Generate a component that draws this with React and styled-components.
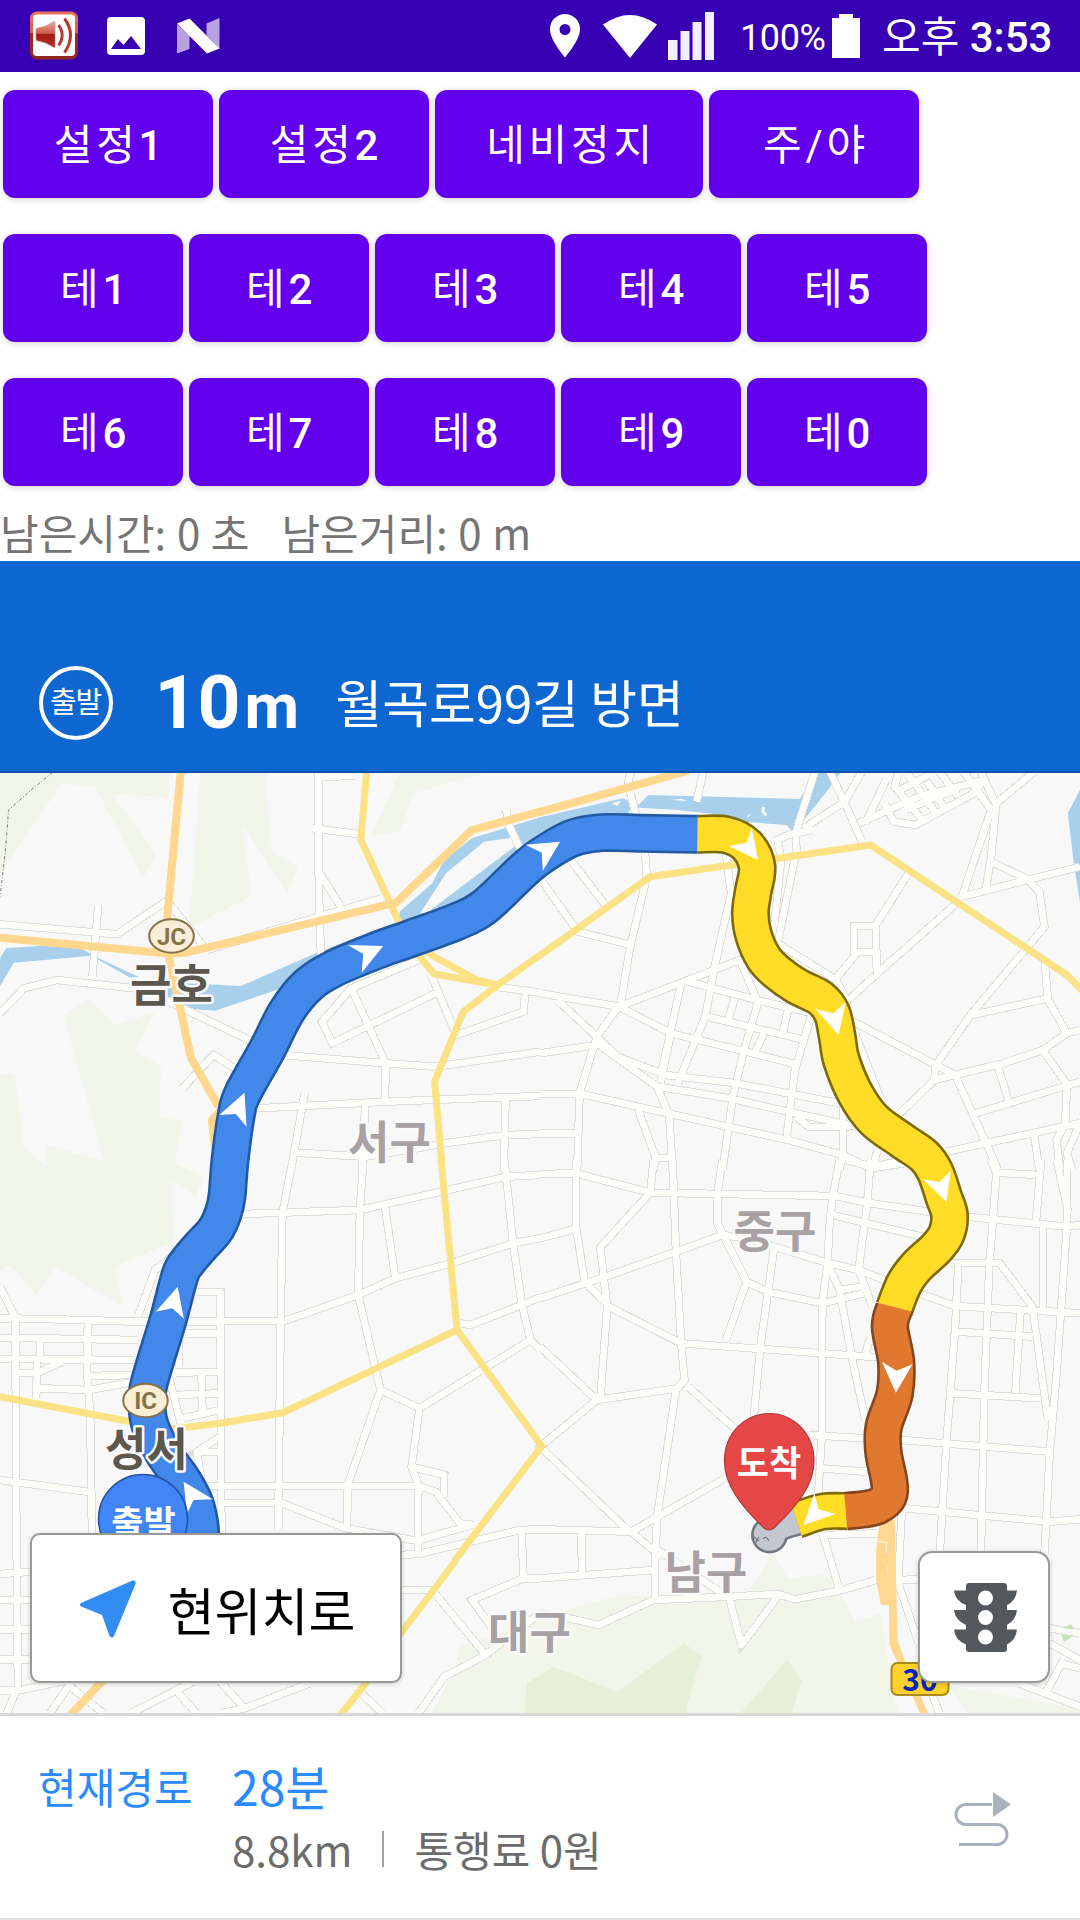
import React from "react";
import styled, { createGlobalStyle } from "styled-components";

const GlobalStyle = createGlobalStyle`
  * { box-sizing: border-box; }
  body {
    margin: 0;
    background: #fff;
    font-family: Roboto, "Noto Sans CJK KR", sans-serif;
  }
`;

const Screen = styled.div`
  width: 1080px;
  height: 1920px;
  display: flex;
  flex-direction: column;
  overflow: hidden;
  background: #fff;
`;

/* ---------- status bar ---------- */

const StatusBar = styled.header`
  height: 72px;
  flex: none;
  display: flex;
  align-items: center;
  justify-content: space-between;
  padding: 0 28px 0 29px;
  background: #3700b3;
  color: #fff;
`;

const StatusGroup = styled.div`
  display: flex;
  align-items: center;
  height: 72px;
`;

const StatusIcon = styled.svg`
  display: block;
  flex: none;
  margin-left: ${(p) => p.$gap || 0}px;
`;

const BatteryLevel = styled.span`
  margin-left: 26px;
  width: 89px;
  font-size: 36px;
  letter-spacing: -0.4px;
  line-height: 48px;
  padding-top: 3px;
  white-space: nowrap;
`;

const Clock = styled.span`
  margin-left: 22px;
  width: 170px;
  font-size: 42px;
  line-height: 56px;
  padding-top: 4px;
  white-space: nowrap;
`;

const Medium = styled.span`
  font-weight: 500;
`;

/* ---------- control buttons ---------- */

const Controls = styled.div`
  flex: none;
  height: 432px;
  display: flex;
  flex-direction: column;
  gap: 36px;
  padding: 18px 3px;
`;

const ButtonRow = styled.div`
  display: flex;
  gap: 6px;
  height: 108px;
`;

const PurpleButton = styled.button`
  width: ${(p) => p.$width}px;
  height: 108px;
  padding: 3px 0 0 4px;
  border: 0;
  border-radius: 12px;
  background: #6200ee;
  color: #fff;
  font-family: inherit;
  font-size: 42px;
  line-height: 56px;
  letter-spacing: 3.75px;
  box-shadow: 0 1px 6px rgba(0, 0, 0, 0.2);
`;

const Remaining = styled.div`
  flex: none;
  height: 57px;
  font-family: "Noto Sans CJK KR", sans-serif;
  font-size: 42px;
  line-height: 55px;
  word-spacing: 1.25px;
  color: #757575;
  white-space: pre;
`;

/* ---------- guidance banner ---------- */

const Banner = styled.section`
  flex: none;
  height: 212px;
  display: flex;
  align-items: center;
  padding: 73px 0 0 38.5px;
  background: #0e67d1;
  border-bottom: 2px solid #0c54ad;
  color: #fff;
`;

const StartBadge = styled.div`
  width: 74px;
  height: 74px;
  border: 4px solid #fff;
  border-radius: 50%;
  display: flex;
  align-items: center;
  justify-content: center;
  padding-top: 1px;
  font-size: 29px;
  letter-spacing: -1.2px;
  line-height: 40px;
`;

const Distance = styled.div`
  margin-left: 42px;
  padding-top: 3px;
  width: 181px;
  font-weight: 700;
  font-size: 75px;
  line-height: 84px;
  white-space: nowrap;
`;

const Unit = styled.span`
  font-size: 63px;
  margin-left: 4px;
`;

const Direction = styled.div`
  font-family: "Noto Sans CJK KR", sans-serif;
  font-size: 50.8px;
  line-height: 74px;
  padding-bottom: 4px;
  white-space: nowrap;
`;

/* ---------- map ---------- */

const MapArea = styled.main`
  position: relative;
  flex: none;
  height: 940px;
  overflow: hidden;
`;

const MapCanvas = styled.svg`
  display: block;
`;

const FloatingButton = styled.button`
  position: absolute;
  bottom: 30px;
  ${(p) => p.$side}: 30px;
  width: ${(p) => p.$width}px;
  height: ${(p) => p.$height}px;
  display: flex;
  align-items: center;
  justify-content: center;
  gap: 32px;
  padding: 1px 0 0 3px;
  border: 2px solid #999;
  border-radius: ${(p) => p.$radius}px;
  background: #fff;
  box-shadow: 0 1px 4px rgba(0, 0, 0, 0.2);
  font-family: "Noto Sans CJK KR", sans-serif;
  font-size: 51px;
  line-height: 74px;
  color: #000;
`;

/* ---------- route panel ---------- */

const RoutePanel = styled.footer`
  flex: none;
  height: 207px;
  display: flex;
  align-items: flex-start;
  border-top: 3px solid #d7d7d7;
  border-bottom: 2px solid #e0e0e0;
  padding: 38px 68px 0 38px;
  font-family: "Noto Sans CJK KR", sans-serif;
  background: #fff;
`;

const RouteName = styled.div`
  width: 194px;
  padding-top: 1px;
  font-size: 42px;
  line-height: 62px;
  color: #2a8aff;
`;

const RouteDetails = styled.div`
  flex: 1;
  display: flex;
  flex-direction: column;
  gap: 2px;
`;

const Duration = styled.div`
  font-size: 48px;
  line-height: 62px;
  color: #2a8aff;
`;

const Facts = styled.div`
  display: flex;
  align-items: center;
  font-size: 42px;
  line-height: 62px;
  color: #6c6c6c;
`;

const Divider = styled.span`
  width: 2px;
  height: 36px;
  margin: 0 30px 0 30px;
  background: #9da0aa;
`;

const RouteIcon = styled.svg`
  margin-top: 37px;
`;

/* ---------- map data ---------- */

const SX = 540 / 1568;
const SY = 1 / 3;

const TILES = {
  a: [0, 770],
  b: [540, 770],
  c: [0, 1160],
  d: [540, 1160],
  e: [0, 1500],
  f: [540, 1500],
};

const place = (tile, list) =>
  list.split(" ").map((pair) => {
    const [x, y] = pair.split(",").map(Number);
    return [TILES[tile][0] + x * SX, TILES[tile][1] + y * SY];
  });

const join = (pts) => pts.map((p) => p.map((n) => n.toFixed(1)).join(",")).join(" ");

const PARKS = [
  ["a", "0,0 495,0 485,82 325,72 453,252 415,325 275,48 178,42 15,290 0,330"],
  ["a", "583,0 785,0 770,28 790,245 865,292 835,370 702,160 730,378 548,475"],
  ["a", "1165,0 1440,0 1380,16 1200,70 1160,185 1078,195"],
  ["c", "0,-260 43,-258 68,-40 135,20 135,-45 302,2 185,-432 258,-485 335,-405 450,-445 392,-328 467,-280 465,-132 527,-115 508,10 592,52 568,110 500,62 502,245 332,320 358,440 163,322 105,402 32,318 0,330"],
  ["f", "-318,640 -240,505 -240,438 0,360 80,330 230,285 335,292 600,285 675,160 720,235 835,222 855,250 915,365 990,340 1030,600 1045,640"],
  ["f", "1190,558 1568,625 1568,640 1240,640"],
];

const WOODS = [
  ["f", "-45,640 -38,550 0,525 38,500 225,575 418,430 470,468 425,620 430,640"],
  ["f", "583,640 718,478 760,542 730,640"],
];

const WATER = [
  ["a", "0,648 40,578 265,557 375,622 405,622 280,562 235,535 120,527 18,535 0,565"],
  ["a", "485,652 540,640 700,648 920,548 1160,452 1160,425 1255,340 1290,270 1370,205 1480,170 1568,142 1568,250 1300,460 860,640 625,722 530,715 485,690"],
  ["b", "-5,143 240,85 285,105 315,75 755,87 800,8 872,8 840,55 770,145 735,187 715,165 520,150 285,150 -5,230"],
  ["b", "1570,55 1533,130 1550,280 1570,410"],
];

const ISLANDS = [
  ["a", "1220,430 1295,310 1405,215 1510,200 1500,225 1240,428"],
  ["b", "208,100 235,92 225,108"],
  ["b", "645,110 655,112 650,122 660,132 655,140 642,125"],
  ["b", "600,138 612,130 606,142"],
  ["b", "378,90 410,86 430,93"],
  ["b", "265,112 400,120 530,135 560,150 250,140"],
];

const STREETS = {
  a: [
    "0,463 340,493 485,392 600,540",
    "285,405 278,500 268,620",
    "0,730 70,655 165,630 390,655",
    "480,690 740,818",
    "530,955 620,855 690,900",
    "925,0 925,300 928,440 932,560",
    "925,20 1035,18",
    "908,175 1040,192",
    "928,310 990,410",
    "600,540 925,440 1110,385",
    "820,855 1120,880 1265,890 1568,845",
    "1120,880 1118,995",
    "1215,570 1020,655 935,755 965,820 1275,665",
    "1020,655 1120,880",
    "1250,610 1325,795 1520,725 1525,670",
    "1440,650 1568,668",
    "750,1015 1120,995 1568,978",
    "885,968 845,1200",
    "860,1148 1060,1160 1210,1135 1290,1120 1470,1095 1568,1092",
    "1060,1005 1052,1200",
    "1468,985 1463,1200",
    "1470,120 1475,160 1510,235",
  ],
  b: [
    "265,0 255,40 280,140",
    "475,0 455,95",
    "800,0 742,190 745,240 690,520",
    "690,210 700,270 680,470",
    "840,0 885,100 935,215",
    "935,5 885,95 765,175",
    "680,215 720,195 790,180",
    "1005,30 945,160",
    "925,160 1100,80 1290,30",
    "1030,155 1090,165 1260,70 1290,30",
    "1000,100 1030,160",
    "1040,10 1030,50 1110,150",
    "1070,15 1150,130",
    "1045,60 1130,15",
    "1125,35 1175,115",
    "1160,5 1215,80",
    "1230,5 1310,120",
    "1280,5 1325,105",
    "1060,120 1215,55",
    "1325,100 1435,5",
    "1310,120 1225,380",
    "1325,105 1310,260 1295,355",
    "1310,275 1415,328 1450,365 1465,470 1250,735 1150,885 1205,915 1345,880 1460,840 1530,790 1568,780",
    "1225,380 1415,330 1568,290",
    "1465,570 1475,690 1530,790",
    "1475,685 1255,735",
    "1460,840 1535,950",
    "1215,395 980,610 890,695",
    "1070,310 975,465 978,605",
    "980,467 912,467 912,545 980,545",
    "920,550 860,625",
    "690,520 860,630 890,690",
    "910,755 1150,885",
    "1150,885 1145,930 1040,1035",
    "1145,930 1205,915 1300,1130 1330,1200",
    "1330,890 1360,990",
    "1265,1030 1568,935",
    "1180,1145 1540,1065 1568,1060",
    "1435,1095 1450,1200",
    "1530,950 1525,1060 1500,1110 1510,1200",
    "1568,1060 1530,1150 1545,1200",
    "915,790 990,990",
    "0,325 110,485 265,525",
    "85,265 190,405",
    "305,245 310,320 260,540 235,700 165,800 115,970 108,1200",
    "0,670 230,710 380,790 600,845 750,885",
    "50,690 165,800 225,860 365,915 570,940 870,1000",
    "165,820 340,950 375,1035 385,1200",
    "230,710 430,630 580,570 630,690",
    "540,250 555,370 505,600 480,740 400,940",
    "430,635 630,690 790,730 740,900 715,1110",
    "410,640 350,920",
    "380,790 350,940",
    "565,685 545,755",
    "485,740 770,810",
    "635,690 590,850 560,980 530,1200",
    "720,720 705,790",
    "650,790 625,845",
    "345,950 550,985 720,1025 920,1070",
    "745,1040 780,1070 900,1070",
    "0,850 165,825",
    "0,972 120,972 370,1030 720,1110 880,1155 960,1195 1060,1180",
    "0,1090 110,1090",
    "285,1020 335,1160 330,1200",
    "335,1163 380,1163",
    "880,1005 880,1155 870,1200",
    "980,1140 965,1200",
  ],
  c: [
    "850,0 820,160 815,490 812,750 808,1110",
    "1055,0 1045,150 1040,405 1105,690 1010,975 1008,1100",
    "1465,0 1490,250 1515,430 1540,540 1568,570",
    "705,162 1045,150 1470,50 1568,45",
    "1118,140 1148,355",
    "820,485 1040,405 1148,355 1310,310 1490,250 1568,235",
    "1335,490 1365,495 1515,435 1568,412",
    "1540,540 1218,745 1105,690",
    "1218,745 1195,920 1215,975 1213,1180",
    "1195,920 1290,945 1288,1010",
    "600,978 1215,978 1265,995 1335,1090 1375,1095",
    "640,1028 815,1028 1005,1105 1210,1142 1370,1095",
    "1160,1185 1215,1182 1510,1110 1568,1108",
    "0,475 155,478 400,485 815,483",
    "0,380 45,475 47,1200",
    "0,533 400,540",
    "0,597 390,600",
    "50,638 110,638 180,605",
    "118,525 115,595",
    "108,600 105,715",
    "255,485 253,640 262,760 268,1200",
    "255,648 390,645",
    "115,685 260,690 390,665",
    "570,395 640,395 643,1120",
    "540,520 640,520",
    "520,540 520,620",
    "510,638 640,635",
    "585,640 588,760",
    "510,705 640,700",
    "490,650 525,790",
    "530,775 640,750",
    "640,830 572,875 650,875",
    "572,880 585,960",
    "400,470 450,330 500,290",
    "0,960 265,997",
  ],
  d: [
    "0,42 105,40 320,98 855,108 960,130 1130,155",
    "1240,170 1530,200 1568,195",
    "105,0 105,205 130,365 200,440 410,550 820,580 980,592",
    "0,235 100,208",
    "330,0 320,98 175,262 195,440 175,720",
    "385,0 395,280 410,550 420,660 395,690 340,1070 335,1200",
    "0,415 190,350 395,275 530,225 600,235 680,260 840,310 925,330 1000,360",
    "530,0 515,100 515,190 600,365 540,540",
    "680,260 640,560 620,780",
    "600,365 660,395 820,430 940,400",
    "870,0 850,110 840,200 835,310 820,430 818,830 808,1000",
    "960,0 950,130 925,330 965,440",
    "850,165 1110,230",
    "890,0 965,20 1060,0",
    "835,310 870,390 905,590 945,780",
    "870,390 935,380",
    "960,530 945,580",
    "0,560 165,720 400,685",
    "430,680 570,810",
    "165,720 0,860 260,1115",
    "0,1108 265,1115 545,950",
    "265,1115 350,1190",
    "780,825 945,835",
    "815,925 945,935",
    "1050,840 1480,875",
    "1310,0 1325,40 1315,180 1305,310 1290,700 1280,1200",
    "1325,38 1450,45",
    "1455,0 1440,190",
    "1500,0 1535,160",
    "1530,0 1530,200 1500,640 1480,880 1465,1180",
    "1190,308 1335,310 1430,440 1475,780",
    "1215,310 1205,510 1180,850 1160,1190",
    "1100,400 1205,438 1568,460",
    "1215,515 1430,530",
    "1395,460 1380,700",
    "1460,200 1460,450",
    "1195,700 1450,715",
    "1060,1045 1480,1085 1568,1078",
    "830,1125 980,1120",
  ],
  e: [
    "47,0 52,560 20,640",
    "0,222 90,215",
    "0,300 90,300",
    "0,388 90,388",
    "0,478 90,478",
    "0,572 60,570 200,540",
    "205,550 145,640",
    "205,560 300,640",
    "380,640 560,545",
    "515,575 570,640",
    "640,545 710,625 900,550",
    "640,640 710,625",
    "1030,560 1110,640",
    "1165,270 1255,270 1410,465 1290,530 1215,640",
    "1515,95 1520,235 1370,300 1430,385",
    "1520,235 1568,235",
    "1410,465 1568,340",
  ],
  f: [
    "120,90 122,225",
    "0,235 335,210",
    "335,130 333,300",
    "0,340 85,355 170,375 330,300 550,290 690,282 740,298 870,272 975,240",
    "550,295 585,435 690,290",
    "335,145 550,295",
    "820,100 870,270",
    "1040,240 1100,238",
    "1052,0 1040,250 1100,430",
    "1130,560 1160,640",
    "1480,385 1568,400",
    "1480,430 1568,480",
    "1390,550 1568,620",
    "1520,480 1470,575",
    "1510,490 1568,505",
  ],
};

const STREET_LINES = Object.entries(STREETS).flatMap(([tile, lists]) =>
  lists.map((list) => join(place(tile, list)))
);

const HIGHWAYS = [
  ["a", "525,0 485,450 490,560 555,865 635,1010"],
  ["a", "0,503 480,550 540,548 1150,398 1370,180 1568,125"],
  ["b", "-5,127 430,2"],
  ["e", "300,540 205,645"],
];

const MAIN_ROADS = [
  ["a", "1065,0 1048,210 1165,470 1215,555 1260,612 1445,645"],
  ["a", "1235,545 1385,630 1445,645 1572,552"],
  ["a", "1445,645 1345,725 1262,935 1283,1175"],
  ["b", "-5,560 320,320 960,225 1530,615 1575,662"],
  ["c", "1281,0 1327,510 822,758 640,790 490,808"],
  ["c", "0,710 380,785"],
  ["c", "1327,510 1573,858 1320,1202"],
  ["e", "1325,180 1160,405"],
  ["e", "1065,545 988,645"],
];

const BLUE = [
  ...place("c", "582,1200 582,1110 566,1030 530,960 475,880 437,800 427,740 433,670 488,480 523,345 545,305 580,262 625,210 648,160 659,110 668,0"),
  ...place("a", "687,1030 705,970 775,840 832,725 895,645 970,595 1105,537 1185,508 1325,455 1405,412 1515,305"),
  ...place("b", "0,260 92,205 180,188 300,190 457,193"),
];
const YELLOW = [
  ...place("b", "457,193 540,194 600,226 630,290 618,370 611,430 620,495 650,565 690,608 745,648 815,685 848,730 863,800 875,870 915,970 970,1050 1050,1111"),
  ...place("d", "1115,-12 1147,35 1172,110 1189,165 1180,222 1150,265 1095,318 1058,370 1028,447"),
];
const ORANGE = place("d", "1030,442 1016,500 1034,605 1030,700 998,800 997,875 1014,965 1012,1010 980,1038 940,1048 888,1053");
const YELLOW_END = place("d", "890,1053 820,1055 745,1080");
const GREY_END = place("d", "745,1080 700,1095 665,1115");

/* Catmull-Rom spline through the points */
const smooth = (pts) => {
  let d = `M${pts[0][0]} ${pts[0][1]}`;
  for (let i = 0; i < pts.length - 1; i++) {
    const p0 = pts[i - 1] || pts[i];
    const p1 = pts[i];
    const p2 = pts[i + 1];
    const p3 = pts[i + 2] || p2;
    d += `C${p1[0] + (p2[0] - p0[0]) / 6} ${p1[1] + (p2[1] - p0[1]) / 6} ${
      p2[0] - (p3[0] - p1[0]) / 6
    } ${p2[1] - (p3[1] - p1[1]) / 6} ${p2[0]} ${p2[1]}`;
  }
  return d;
};

const ROUTE = [
  { d: smooth(GREY_END), edge: "#73777e", fill: "#c3c7cf", width: 32 },
  { d: smooth(BLUE), edge: "#2259a3", fill: "#4188ea", width: 39 },
  { d: smooth(YELLOW), edge: "#7d6a08", fill: "#ffdd27", width: 39 },
  { d: smooth(YELLOW_END), edge: "#7d6a08", fill: "#ffdd27", width: 38 },
  { d: smooth(ORANGE), edge: "#84461f", fill: "#e1782f", width: 38.5 },
];

const ARROWS = [
  ["a", "1010,525 1113,528 1050,608 1055,552"],
  ["a", "637,1035 710,968 716,1070 685,1032"],
  ["c", "452,455 516,380 534,476 500,445"],
  ["c", "533,965 618,1018 562,1020 543,1062"],
  ["b", "-42,224 58,215 8,303 5,248"],
  ["b", "548,228 600,218 615,172 633,270"],
  ["b", "800,717 852,730 888,695 867,795"],
  ["d", "1112,58 1160,66 1193,32 1180,125"],
  ["d", "993,605 1035,632 1082,613 1033,698"],
  ["d", "797,1000 808,1047 858,1062 765,1095"],
];

const MapLabel = styled.text`
  font-family: "Noto Sans CJK KR", sans-serif;
  font-weight: 700;
  font-size: 45px;
  text-anchor: middle;
  fill: ${(p) => (p.$dark ? "#5c5850" : "#a8a2a5")};
  stroke: #fafafa;
  stroke-width: 5px;
  stroke-linejoin: round;
  paint-order: stroke;
`;

const PinLabel = styled.text`
  font-family: "Noto Sans CJK KR", sans-serif;
  font-weight: 700;
  font-size: 35px;
  text-anchor: middle;
  fill: #fff;
`;

const JunctionLabel = styled.text`
  font-family: Roboto, sans-serif;
  font-weight: 700;
  font-size: 24px;
  text-anchor: middle;
  fill: #857349;
`;

const RoadNumber = styled.text`
  font-family: "Noto Sans CJK KR", sans-serif;
  font-weight: 700;
  font-size: 30px;
  text-anchor: middle;
  fill: #0524c0;
`;

const Area = ({ shapes, fill }) =>
  shapes.map(([tile, list]) => <polygon key={list} points={join(place(tile, list))} fill={fill} />);

const Lines = ({ shapes, stroke, width }) =>
  shapes.map(([tile, list]) => (
    <polyline
      key={list}
      points={join(place(tile, list))}
      fill="none"
      stroke={stroke}
      strokeWidth={width}
      strokeLinejoin="round"
    />
  ));

const Junction = ({ x, y, children }) => (
  <g>
    <ellipse cx={x} cy={y} rx="22.3" ry="16.7" fill="#fbeed7" stroke="#85714a" strokeWidth="2" />
    <JunctionLabel x={x} y={y + 8.5}>
      {children}
    </JunctionLabel>
  </g>
);

function RouteMap() {
  return (
    <MapCanvas width="1080" height="940" viewBox="0 773 1080 940">
      <rect x="0" y="773" width="1080" height="940" fill="#f8f8f8" />
      <Area shapes={PARKS} fill="#f2f5ea" />
      <Area shapes={WOODS} fill="#e6f0d9" />
      <Area shapes={WATER} fill="#a8cfeb" />
      <Area shapes={ISLANDS} fill="#f8f8f8" />
      <polyline
        points={join(place("a", "152,8 90,60 25,120 15,250 0,380"))}
        fill="none"
        stroke="#777"
        strokeWidth="1"
        strokeDasharray="3 2 1 2"
      />
      <g fill="none" stroke="#dedede" strokeWidth="8.4" shapeRendering="crispEdges">
        {STREET_LINES.map((pts) => (
          <polyline key={pts} points={pts} />
        ))}
      </g>
      <g fill="none" stroke="#fdfdf9" strokeWidth="6.4" strokeLinejoin="round" shapeRendering="crispEdges">
        {STREET_LINES.map((pts) => (
          <polyline key={pts} points={pts} />
        ))}
      </g>
      <Lines shapes={MAIN_ROADS} stroke="#fbe285" width={7} />
      <Lines shapes={HIGHWAYS} stroke="#ffd78e" width={8} />
      <Area
        shapes={[
          ["a", "603,1047 635,1010 635,1150 615,1150"],
          ["f", "987,60 1030,60 1038,420 1062,490 1128,642 1105,642 1015,435 1013,315 990,315 976,240 976,150"],
        ]}
        fill="#ffd78e"
      />
      <path d="M877.5 1542H886.5V1554M887 1565V1573" fill="none" stroke="#fff6e0" strokeWidth="1" />
      <Area shapes={[["f", "1515,385 1542,373 1550,388"], ["f", "1512,402 1548,408 1522,426"]]} fill="#c9e4b4" />

      <circle cx="769.5" cy="1535" r="18.5" fill="#73777e" />
      {ROUTE.map((r) => (
        <path key={r.d} d={r.d} fill="none" stroke={r.edge} strokeWidth={r.width} strokeLinejoin="round" />
      ))}
      {ROUTE.map((r) => (
        <path
          key={r.d}
          d={r.d}
          fill="none"
          stroke={r.fill}
          strokeWidth={r.width - 5.2}
          strokeLinejoin="round"
        />
      ))}
      <circle cx="769.5" cy="1535" r="15.8" fill="#c3c7cf" />
      <path d="M753 1536l6 5m-4 3l4 -7m4 2q3 -4 6 2" fill="none" stroke="#73777e" strokeWidth="1.2" />
      <Area shapes={ARROWS} fill="#fff" />

      <MapLabel x="389.5" y="1158.5">서구</MapLabel>
      <MapLabel x="775" y="1247.5">중구</MapLabel>
      <MapLabel x="706" y="1588.5">남구</MapLabel>
      <MapLabel x="529.5" y="1648.5">대구</MapLabel>
      <MapLabel $dark x="171.5" y="1001.5">금호</MapLabel>
      <MapLabel $dark x="146.5" y="1465.5">성서</MapLabel>
      <Junction x={171.5} y={936}>JC</Junction>
      <Junction x={145.5} y={1400.5}>IC</Junction>

      <circle cx="143" cy="1519" r="44.5" fill="#4285f8" stroke="#24539f" strokeWidth="1.5" />
      <PinLabel x="143.5" y="1536">출발</PinLabel>

      <path
        d="M769 1413.5C794 1413.5 814 1434 814 1461C814 1485 797 1506 774 1528Q769 1532 764 1528C741 1506 724.5 1485 724.5 1461C724.5 1434 744 1413.5 769 1413.5Z"
        fill="#e54646"
        stroke="#a83a3a"
        strokeWidth="1.2"
      />
      <PinLabel x="769" y="1476">도착</PinLabel>

      <rect x="891.5" y="1663" width="57" height="32" rx="6" fill="#fdd12a" stroke="#aa8b14" strokeWidth="2" />
      <RoadNumber x="920" y="1691">30</RoadNumber>
    </MapCanvas>
  );
}

/* ---------- icons ---------- */

const SpeakerIcon = () => (
  <StatusIcon width="50" height="52" viewBox="0 0 50 52">
    <defs>
      <linearGradient id="frame" x1="0" y1="0" x2="0" y2="1">
        <stop offset="0" stopColor="#e8705c" />
        <stop offset="0.44" stopColor="#d8604e" />
        <stop offset="0.46" stopColor="#a82418" />
        <stop offset="1" stopColor="#8c2a22" />
      </linearGradient>
      <linearGradient id="cone" x1="0" y1="0" x2="0" y2="1">
        <stop offset="0" stopColor="#e9a79f" />
        <stop offset="0.45" stopColor="#cf5a4d" />
        <stop offset="0.5" stopColor="#9c1a12" />
        <stop offset="1" stopColor="#b5352a" />
      </linearGradient>
    </defs>
    <rect x="1" y="1.5" width="48" height="48" rx="7" fill="url(#frame)" />
    <rect x="4" y="4.5" width="42" height="41.5" rx="4" fill="#fff" />
    <path
      d="M7 19.5Q7 18 9 18Q17 17 24 12Q26 11 26 13V36Q26 38.5 24 37Q17 32 9 31Q7 31 7 29Z"
      fill="url(#cone)"
      stroke="#b9847e"
      strokeWidth="0.6"
    />
    <path d="M29.5 15Q37 25 29.5 35.5" fill="none" stroke="#b8372c" strokeWidth="2.8" />
    <path d="M35.5 8.5Q47.5 25 35.5 42.5" fill="none" stroke="#b8372c" strokeWidth="3" />
  </StatusIcon>
);

const ImageIcon = () => (
  <StatusIcon $gap={28} width="38" height="38" viewBox="0 0 38 38">
    <path
      fillRule="evenodd"
      fill="#fff"
      d="M4 0H34Q38 0 38 4V34Q38 38 34 38H4Q0 38 0 34V4Q0 0 4 0ZM4 32H34L24 19L16.5 28L11 22Z"
    />
  </StatusIcon>
);

const NougatIcon = () => (
  <StatusIcon $gap={32} width="43" height="36" viewBox="0 0 43 36">
    <path d="M0 6L12.5 18V31L0 35.5ZM29.5 5.5L42.5 0V31L29.5 17Z" fill="#b8a2e2" />
    <path d="M0 5.5L12.5 0.5L42.5 30.5L30 35.5Z" fill="#fff" />
  </StatusIcon>
);

const LocationIcon = () => (
  <StatusIcon width="30" height="44" viewBox="0 0 30 44">
    <path
      fillRule="evenodd"
      fill="#fff"
      d="M15 0A15 15 0 0 1 30 15.5C30 26 15 43.5 15 43.5S0 26 0 15.5A15 15 0 0 1 15 0ZM15 10A5.5 5.5 0 1 0 15 21A5.5 5.5 0 1 0 15 10Z"
    />
  </StatusIcon>
);

const WifiIcon = () => (
  <StatusIcon $gap={23} width="54" height="43" viewBox="0 0 54 43">
    <path d="M27 43L0 9.5Q27 -9.500 54 9.5Z" fill="#fff" />
  </StatusIcon>
);

const SignalIcon = () => (
  <StatusIcon $gap={11} width="46" height="48" viewBox="0 0 46 48">
    <path d="M0 28H9.500V48H0ZM12.5 19H21.5V48H12.5ZM24.5 10H33.5V48H24.5ZM37 0H46V48H37Z" fill="#f3effb" />
  </StatusIcon>
);

const BatteryIcon = () => (
  <StatusIcon $gap={3} width="28" height="44" viewBox="0 0 28 44">
    <path d="M7 0H21V4H28V44H0V4H7Z" fill="#fff" />
  </StatusIcon>
);

const NavigateIcon = () => (
  <svg width="56" height="58" viewBox="0 0 56 58">
    <path
      d="M52.5 0.5Q56.5 0 55.5 4L34 56Q32 59 29.5 56L22 35L1 26.5Q-1 24.5 1 23Z"
      fill="#318df1"
    />
  </svg>
);

const TrafficIcon = () => (
  <svg width="63" height="69" viewBox="0 0 63 69">
    <path
      fill="#54585d"
      d="M12 3Q12 0 15 0H50Q53 0 53 3V7.5H63Q62 18 53 22V27H63Q62 37 53 42V46.5H63Q62 57 53 61.5V66Q53 69 50 69H15Q12 69 12 66V61.5Q1 57 0 46.5H12V42Q1 37 0 27H12V22Q1 18 0 7.5H12Z"
    />
    <circle cx="31.5" cy="15" r="7.5" fill="#fff" />
    <circle cx="31.5" cy="34.5" r="7.5" fill="#fff" />
    <circle cx="31.5" cy="54" r="7.5" fill="#fff" />
  </svg>
);

const BUTTONS = [
  [["설정", "1", 210], ["설정", "2", 210], ["네비정지", "", 268], ["주/야", "", 210]],
  ["1", "2", "3", "4", "5"].map((n) => ["테", n, 180]),
  ["6", "7", "8", "9", "0"].map((n) => ["테", n, 180]),
];

export default function App() {
  return (
    <Screen>
      <GlobalStyle />
      <StatusBar>
        <StatusGroup>
          <SpeakerIcon />
          <ImageIcon />
          <NougatIcon />
        </StatusGroup>
        <StatusGroup>
          <LocationIcon />
          <WifiIcon />
          <SignalIcon />
          <BatteryLevel>100%</BatteryLevel>
          <BatteryIcon />
          <Clock>
            오후 <Medium>3:53</Medium>
          </Clock>
        </StatusGroup>
      </StatusBar>

      <Controls>
        {BUTTONS.map((row, i) => (
          <ButtonRow key={i}>
            {row.map(([label, digit, width]) => (
              <PurpleButton key={label + digit} $width={width}>
                {label}
                <Medium>{digit}</Medium>
              </PurpleButton>
            ))}
          </ButtonRow>
        ))}
      </Controls>

      <Remaining>{"남은시간: 0 초   남은거리: 0 m"}</Remaining>

      <Banner>
        <StartBadge>출발</StartBadge>
        <Distance>
          10<Unit>m</Unit>
        </Distance>
        <Direction>월곡로99길 방면</Direction>
      </Banner>

      <MapArea>
        <RouteMap />
        <FloatingButton $side="left" $width={372} $height={150} $radius={10}>
          <NavigateIcon />
          현위치로
        </FloatingButton>
        <FloatingButton $side="right" $width={132} $height={132} $radius={14}>
          <TrafficIcon />
        </FloatingButton>
      </MapArea>

      <RoutePanel>
        <RouteName>현재경로</RouteName>
        <RouteDetails>
          <Duration>28분</Duration>
          <Facts>
            8.8km
            <Divider />
            통행료 0원
          </Facts>
        </RouteDetails>
        <RouteIcon width="58" height="56" viewBox="0 0 58 56">
          <path
            d="M38 13.5H12A10 10 0 0 0 12 33.5H43A10 10 0 0 1 43 53.5H5"
            fill="none"
            stroke="#a9b1bc"
            strokeWidth="3"
          />
          <path d="M39 1L57 13.5L39 26Z" fill="#a9b1bc" />
        </RouteIcon>
      </RoutePanel>
    </Screen>
  );
}
